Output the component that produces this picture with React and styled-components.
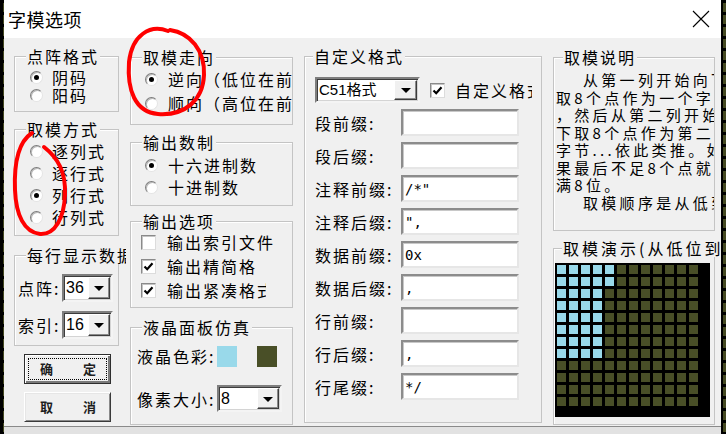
import React from "react";
import styled, { createGlobalStyle } from "styled-components";

const GlobalStyle = createGlobalStyle`
  html, body {
    margin: 0;
    padding: 0;
  }
  body {
    width: 726px;
    height: 434px;
    overflow: hidden;
    background-color: #000;
    background-image:
      linear-gradient(#000 3px, transparent 3px),
      linear-gradient(90deg, #000 3px, #454a22 3px);
    background-size: 12px 12px;
    font-family: "Noto Sans CJK SC", "Noto Sans", sans-serif;
    color: #000;
  }
`;

const Screen = styled.div`
  position: relative;
  width: 726px;
  height: 434px;
  display: flex;
  padding-left: 4px;
  box-sizing: border-box;
`;

const Window = styled.div`
  width: 717px;
  height: 434px;
  display: flex;
  flex-direction: column;
  background: #e2e2e2;
  overflow: hidden;
`;

const TitleBar = styled.div`
  height: 38px;
  flex-shrink: 0;
  background: #fff;
  display: flex;
  align-items: center;
  justify-content: space-between;
  padding: 0 11px 0 4px;
`;

const Title = styled.span`
  font-size: 18px;
  line-height: 24px;
  letter-spacing: 0.5px;
`;

const Body = styled.div`
  height: 389px;
  flex-shrink: 0;
  box-sizing: border-box;
  display: flex;
  gap: 11px;
  padding: 9px 0 0 10px;
  background: #f0f0f0;
  border-bottom: 1px solid #8a8a8a;
`;

const Column = styled.div`
  width: ${(p) => p.$w}px;
  flex-shrink: 0;
  display: flex;
  flex-direction: column;
`;

const Group = styled.fieldset`
  margin: ${(p) => p.$top || 0}px 0 0 0;
  padding: 0;
  min-width: 0;
  height: ${(p) => p.$h}px;
  box-sizing: border-box;
  border: 1px solid #c4c4c4;
  box-shadow: inset 1px 1px 0 #fff;
`;

const Legend = styled.legend`
  margin-left: ${(p) => (p.$inset ?? 10)}px;
  padding: 0 1px;
  font-size: 16px;
  line-height: 18px;
  letter-spacing: ${(p) => p.$ls || 2}px;
  white-space: nowrap;
  overflow: ${(p) => (p.$max ? "hidden" : "visible")};
  max-width: ${(p) => (p.$max ? `${p.$max}px` : "none")};
  background: #f0f0f0;
`;

const Content = styled.div`
  padding: ${(p) => p.$pad || "0"};
  display: flex;
  flex-direction: column;
  gap: ${(p) => p.$gap || 0}px;
  overflow: ${(p) => (p.$clip ? "hidden" : "visible")};
`;

const OptionRow = styled.div`
  height: ${(p) => p.$h}px;
  display: flex;
  align-items: center;
  gap: ${(p) => p.$gap ?? 9}px;
  white-space: nowrap;
`;

const Label = styled.span`
  font-size: 16px;
  line-height: 18px;
  letter-spacing: 2px;
  white-space: nowrap;
  flex-shrink: 0;
  width: ${(p) => (p.$w ? `${p.$w}px` : "auto")};
  max-width: ${(p) => (p.$max ? `${p.$max}px` : "none")};
  overflow: ${(p) => (p.$max ? "hidden" : "visible")};
`;

const Radio = styled.span`
  width: 13px;
  height: 13px;
  flex-shrink: 0;
  box-sizing: border-box;
  border-radius: 50%;
  background: #fff;
  border: 1px solid;
  border-color: #7d7d7d #e4e4e4 #e4e4e4 #7d7d7d;
  box-shadow: inset 1px 1px 0 #b9b9b9;
  display: flex;
  align-items: center;
  justify-content: center;
  &::after {
    content: "";
    width: 5px;
    height: 5px;
    border-radius: 50%;
    background: ${(p) => (p.$on ? "#000" : "transparent")};
  }
`;

const Check = styled.span`
  width: 15px;
  height: 15px;
  flex-shrink: 0;
  box-sizing: border-box;
  background: #fff;
  border: 1px solid;
  border-color: #8a8a8a #dcdcdc #dcdcdc #8a8a8a;
  box-shadow: inset 1px 1px 0 #c4c4c4;
  display: flex;
  align-items: center;
  justify-content: center;
`;

const Combo = styled.div`
  width: ${(p) => p.$w}px;
  height: ${(p) => p.$h || 28}px;
  flex-shrink: 0;
  box-sizing: border-box;
  display: flex;
  background: #fff;
  border: 2px solid;
  border-color: #7e7e7e #f4f4f4 #f4f4f4 #7e7e7e;
  box-shadow: inset 1px 1px 0 #3c3c3c, inset -1px -1px 0 #d4d4d4;
  padding: 1px;
`;

const ComboValue = styled.span`
  flex: 1;
  display: flex;
  align-items: center;
  padding-left: 1px;
  font-family: "Liberation Sans", "Noto Sans CJK SC", sans-serif;
  font-size: ${(p) => p.$size || 16}px;
  line-height: 20px;
  white-space: nowrap;
`;

const ComboButton = styled.span`
  width: ${(p) => p.$w || 22}px;
  flex-shrink: 0;
  box-sizing: border-box;
  background: #f0f0f0;
  border: 1px solid;
  border-color: #fff #3c3c3c #3c3c3c #fff;
  box-shadow: inset -1px -1px 0 #8a8a8a;
  display: flex;
  align-items: center;
  justify-content: center;
  &::after {
    content: "";
    width: 0;
    height: 0;
    border-left: 5px solid transparent;
    border-right: 5px solid transparent;
    border-top: 5px solid #000;
    margin-top: 1px;
  }
`;

const TextBox = styled.div`
  width: 118px;
  height: 27px;
  flex-shrink: 0;
  box-sizing: border-box;
  background: #fff;
  border: 2px solid;
  border-color: #8c8c8c #e6e6e6 #e6e6e6 #8c8c8c;
  box-shadow: inset 1px 1px 0 #c8c8c8;
  padding-left: 2px;
  display: flex;
  align-items: center;
  font-family: "DejaVu Sans Mono", "Liberation Mono", monospace;
  font-size: 14px;
  line-height: 18px;
`;

const FieldRow = styled.div`
  height: 27px;
  display: flex;
  align-items: center;
`;

const PushButton = styled.div`
  width: 87px;
  height: ${(p) => p.$h || 30}px;
  margin: ${(p) => p.$top || 0}px 0 0 10px;
  box-sizing: border-box;
  background: #f0f0f0;
  display: flex;
  align-items: center;
  justify-content: space-between;
  padding: 0 14px 0 15px;
  font-size: 13px;
  line-height: 18px;
  font-weight: 700;
  color: #1e1e1e;
  border: 1px solid;
  border-color: ${(p) => (p.$default ? "#2e2e2e" : "#fff #3a3a3a #3a3a3a #fff")};
  box-shadow: ${(p) =>
    p.$default
      ? "inset 1px 1px 0 #fff, inset -2px -2px 0 #7a7a7a"
      : "inset 1px 1px 0 #e6e6e6, inset -1px -1px 0 #8a8a8a"};
  outline: ${(p) => (p.$default ? "1px dotted #000" : "none")};
  outline-offset: -5px;
`;

const Swatch = styled.span`
  width: 20px;
  height: 21px;
  flex-shrink: 0;
  background: ${(p) => p.$color};
  margin-left: ${(p) => p.$left || 0}px;
`;

const Notes = styled.div`
  padding: 5px 0 0 2px;
  overflow: hidden;
  font-size: 15px;
  line-height: 17.5px;
  letter-spacing: 3.3px;
  white-space: pre;
`;

const NoteLine = styled.div`
  padding-left: ${(p) => (p.$indent ? 27 : 0)}px;
`;

const Matrix = styled.div`
  margin: 6px 0 0 1px;
  width: 155px;
  height: 154px;
  box-sizing: border-box;
  background: #000;
  padding: 2px 0 0 2px;
  display: grid;
  grid-template-columns: repeat(12, 9px);
  grid-auto-rows: 9px;
  gap: 3px;
`;

const Dot = styled.span`
  background: ${(p) => (p.$lit ? "#99d9ea" : "#494f27")};
`;

const Marks = styled.svg`
  position: absolute;
  left: 0;
  top: 0;
  pointer-events: none;
`;

const notes = [
  { t: "从第一列开始向下", indent: true },
  { t: "取8个点作为一个字节" },
  { t: "，然后从第二列开始向" },
  { t: "下取8个点作为第二个" },
  { t: "字节...依此类推。如" },
  { t: "果最后不足8个点就补" },
  { t: "满8位。" },
  { t: "取模顺序是从低到高", indent: true },
];

const fields = [
  ["段前缀:", ""],
  ["段后缀:", ""],
  ["注释前缀:", "/*\""],
  ["注释后缀:", "\","],
  ["数据前缀:", "0x"],
  ["数据后缀:", ","],
  ["行前缀:", ""],
  ["行后缀:", ","],
  ["行尾缀:", "*/"],
];

const CheckMark = () => (
  <svg width="11" height="11" viewBox="0 0 11 11">
    <path d="M1.5 5.5 L4.2 8.2 L9.5 2.2" fill="none" stroke="#000" strokeWidth="2.2" />
  </svg>
);

export default function App() {
  const dots = [];
  for (let r = 0; r < 12; r++) {
    for (let c = 0; c < 12; c++) {
      const lit = (c < 4 && r < 8) || (c === 4 && r < 2);
      dots.push(<Dot key={`${r}-${c}`} $lit={lit} />);
    }
  }

  return (
    <>
      <GlobalStyle />
      <Screen>
        <Window>
          <TitleBar>
            <Title>字模选项</Title>
            <svg width="18" height="18" viewBox="0 0 18 18">
              <path d="M1 1 L17 17 M17 1 L1 17" stroke="#000" strokeWidth="1.1" />
            </svg>
          </TitleBar>
          <Body>
            <Column $w={105}>
              <Group $h={65}>
                <Legend $inset={11}>点阵格式</Legend>
                <Content $pad="3px 0 0 15px">
                  <OptionRow $h={18}>
                    <Radio $on />
                    <Label>阴码</Label>
                  </OptionRow>
                  <OptionRow $h={18}>
                    <Radio />
                    <Label>阳码</Label>
                  </OptionRow>
                </Content>
              </Group>
              <Group $h={116} $top={8}>
                <Legend $inset={11}>取模方式</Legend>
                <Content $pad="2px 0 0 15px">
                  <OptionRow $h={22}>
                    <Radio />
                    <Label>逐列式</Label>
                  </OptionRow>
                  <OptionRow $h={22}>
                    <Radio />
                    <Label>逐行式</Label>
                  </OptionRow>
                  <OptionRow $h={22}>
                    <Radio $on />
                    <Label>列行式</Label>
                  </OptionRow>
                  <OptionRow $h={22}>
                    <Radio />
                    <Label>行列式</Label>
                  </OptionRow>
                </Content>
              </Group>
              <Group $h={100} $top={10}>
                <Legend $inset={11} $max={98}>每行显示数据</Legend>
                <Content $pad="10px 0 0 3px" $gap={9}>
                  <OptionRow $h={28} $gap={1}>
                    <Label $w={43}>点阵:</Label>
                    <Combo $w={51}>
                      <ComboValue>36</ComboValue>
                      <ComboButton />
                    </Combo>
                  </OptionRow>
                  <OptionRow $h={28} $gap={1}>
                    <Label $w={43}>索引:</Label>
                    <Combo $w={51}>
                      <ComboValue>16</ComboValue>
                      <ComboButton />
                    </Combo>
                  </OptionRow>
                </Content>
              </Group>
              <PushButton $default $top={8}>
                <span>确</span>
                <span>定</span>
              </PushButton>
              <PushButton $top={8}>
                <span>取</span>
                <span>消</span>
              </PushButton>
            </Column>

            <Column $w={163}>
              <Group $h={77} $top={1}>
                <Legend $inset={11}>取模走向</Legend>
                <Content $pad="1px 0 0 14px" $clip>
                  <OptionRow $h={24} $gap={10}>
                    <Radio $on />
                    <Label>逆向（低位在前）</Label>
                  </OptionRow>
                  <OptionRow $h={24} $gap={10}>
                    <Radio />
                    <Label>顺向（高位在前）</Label>
                  </OptionRow>
                </Content>
              </Group>
              <Group $h={73} $top={8}>
                <Legend $inset={11}>输出数制</Legend>
                <Content $pad="3px 0 0 14px">
                  <OptionRow $h={22} $gap={10}>
                    <Radio $on />
                    <Label>十六进制数</Label>
                  </OptionRow>
                  <OptionRow $h={22} $gap={10}>
                    <Radio />
                    <Label>十进制数</Label>
                  </OptionRow>
                </Content>
              </Group>
              <Group $h={96} $top={6}>
                <Legend $inset={11}>输出选项</Legend>
                <Content $pad="0 0 0 10px">
                  <OptionRow $h={24} $gap={11}>
                    <Check />
                    <Label>输出索引文件</Label>
                  </OptionRow>
                  <OptionRow $h={24} $gap={11}>
                    <Check>
                      <CheckMark />
                    </Check>
                    <Label>输出精简格</Label>
                  </OptionRow>
                  <OptionRow $h={24} $gap={11}>
                    <Check>
                      <CheckMark />
                    </Check>
                    <Label $max={99}>输出紧凑格式</Label>
                  </OptionRow>
                </Content>
              </Group>
              <Group $h={107} $top={10}>
                <Legend $inset={11}>液晶面板仿真</Legend>
                <Content $pad="9px 0 0 6px" $gap={18}>
                  <OptionRow $h={22} $gap={0}>
                    <Label $w={80}>液晶色彩:</Label>
                    <Swatch $color="#99d9ea" />
                    <Swatch $color="#494f27" $left={20} />
                  </OptionRow>
                  <OptionRow $h={27} $gap={0}>
                    <Label $w={80}>像素大小:</Label>
                    <Combo $w={65} $h={27}>
                      <ComboValue>8</ComboValue>
                      <ComboButton />
                    </Combo>
                  </OptionRow>
                </Content>
              </Group>
            </Column>

            <Column $w={238}>
              <Group $h={376}>
                <Legend $inset={8}>自定义格式</Legend>
                <Content $pad="12px 0 0 10px" $gap={6}>
                  <OptionRow $h={26} $gap={10}>
                    <Combo $w={105} $h={26}>
                      <ComboValue $size={15}>C51格式</ComboValue>
                      <ComboButton $w={23} />
                    </Combo>
                    <Check>
                      <CheckMark />
                    </Check>
                    <Label $max={77}>自定义格式</Label>
                  </OptionRow>
                  {fields.map(([name, value]) => (
                    <FieldRow key={name}>
                      <Label $w={86}>{name}</Label>
                      <TextBox>{value}</TextBox>
                    </FieldRow>
                  ))}
                </Content>
              </Group>
            </Column>

            <Column $w={162}>
              <Group $h={183} $top={1}>
                <Legend $inset={9}>取模说明</Legend>
                <Notes>
                  {notes.map((n, i) => (
                    <NoteLine key={i} $indent={n.indent}>
                      {n.t}
                    </NoteLine>
                  ))}
                </Notes>
              </Group>
              <Group $h={186} $top={8}>
                <Legend $inset={8} $ls={3}>取模演示(从低位到高位)</Legend>
                <Matrix>{dots}</Matrix>
              </Group>
            </Column>
          </Body>
        </Window>
        <Marks width="726" height="434" viewBox="0 0 726 434">
          <path
            d="M168 31 C150 24 132 35 129 62 C127 90 135 112 158 114 C185 116 203 100 204 75 C205 50 190 33 170 30"
            fill="none"
            stroke="#ff0000"
            strokeWidth="4"
            strokeLinecap="round"
          />
          <path
            d="M32 133 C18 142 14 165 15 190 C16 215 24 232 40 234 C55 235 64 218 65 195 C66 172 58 158 44 147"
            fill="none"
            stroke="#ff0000"
            strokeWidth="4"
            strokeLinecap="round"
          />
        </Marks>
      </Screen>
    </>
  );
}
